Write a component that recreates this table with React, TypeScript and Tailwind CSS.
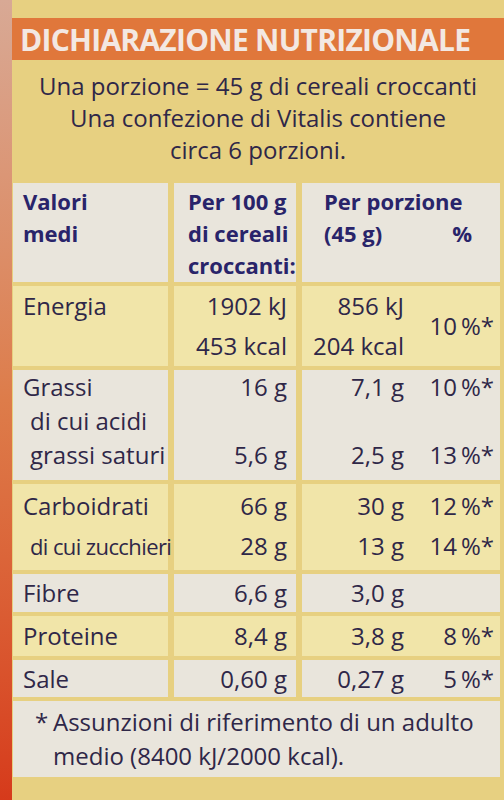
import React from 'react';

const font = { fontFamily: '"Open Sans", "DejaVu Sans", sans-serif' };

const gray = 'bg-[#e9e5dc]';
const yellow = 'bg-[#f1e5a9]';

type Row = {
  tone: string;
  labels: { text: string; sub?: boolean; tight?: boolean }[];
  per100: string[];
  perPortion: string[];
  pct: string[];
  lead: string;
  pad: string;
  h: string;
  centerPct?: boolean;
};

const rows: Row[] = [
  {
    tone: yellow,
    labels: [{ text: 'Energia' }],
    per100: ['1902 kJ', '453 kcal'],
    perPortion: ['856 kJ', '204 kcal'],
    pct: ['10\u2009%*'],
    lead: 'leading-[40px]',
    pad: 'pt-0',
    h: 'h-[80px]',
    centerPct: true,
  },
  {
    tone: gray,
    labels: [{ text: 'Grassi' }, { text: 'di cui acidi', sub: true }, { text: 'grassi saturi', sub: true }],
    per100: ['16 g', '', '5,6 g'],
    perPortion: ['7,1 g', '', '2,5 g'],
    pct: ['10\u2009%*', '', '13\u2009%*'],
    lead: 'leading-[34px]',
    pad: 'pt-0',
    h: 'h-[110px]',
  },
  {
    tone: yellow,
    labels: [{ text: 'Carboidrati' }, { text: 'di cui zucchieri', sub: true, tight: true }],
    per100: ['66 g', '28 g'],
    perPortion: ['30 g', '13 g'],
    pct: ['12\u2009%*', '14\u2009%*'],
    lead: 'leading-[40px]',
    pad: 'pt-[2px]',
    h: 'h-[86px]',
  },
  {
    tone: gray,
    labels: [{ text: 'Fibre' }],
    per100: ['6,6 g'],
    perPortion: ['3,0 g'],
    pct: [''],
    lead: 'leading-[38px]',
    pad: 'pt-0',
    h: 'h-[38px]',
  },
  {
    tone: yellow,
    labels: [{ text: 'Proteine' }],
    per100: ['8,4 g'],
    perPortion: ['3,8 g'],
    pct: ['8\u2009%*'],
    lead: 'leading-[40px]',
    pad: 'pt-0',
    h: 'h-[40px]',
  },
  {
    tone: gray,
    labels: [{ text: 'Sale' }],
    per100: ['0,60 g'],
    perPortion: ['0,27 g'],
    pct: ['5\u2009%*'],
    lead: 'leading-[37px]',
    pad: 'pt-0',
    h: 'h-[37px]',
  },
];

const Line = ({ children }: { children: React.ReactNode }) => <div className="whitespace-pre">{children || '\u00a0'}</div>;

export default function App() {
  return (
    <div className="flex h-[800px] w-[504px] overflow-hidden bg-[#e7d081] text-[#2f2748]" style={font}>
      <div className="w-[12px] shrink-0 bg-gradient-to-b from-[#d8a995] via-[#dd7c4a] to-[#d63a1b]" />

      <div className="flex flex-1 flex-col pt-[18px]">
        <div className="flex h-[42px] items-center bg-[#e0773b] pl-[8px] text-[30px] font-bold tracking-tight text-[#f3e8e2]">
          DICHIARAZIONE NUTRIZIONALE
        </div>

        <div className="pt-[10px] text-center text-[24px] leading-[32px]">
          <div>Una porzione = 45 g di cereali croccanti</div>
          <div>Una confezione di Vitalis contiene</div>
          <div>circa 6 porzioni.</div>
        </div>

        <div className="mt-[17px] ml-[1px] mr-[4px] grid grid-cols-[155px_122px_1fr] gap-x-[6px] gap-y-[4px] text-[24px]">
          {/* header */}
          <div className={`${gray} h-[99px] pl-[10px] pt-[2px] text-[22px] font-bold leading-[32px] text-[#29246a]`}>
            <div>Valori</div>
            <div>medi</div>
          </div>
          <div className={`${gray} pl-[14px] pt-[2px] text-[22px] font-bold leading-[32px] text-[#29246a]`}>
            <div>Per 100 g</div>
            <div>di cereali</div>
            <div>croccanti:</div>
          </div>
          <div className={`${gray} pl-[22px] pr-[28px] pt-[2px] text-[22px] font-bold leading-[32px] text-[#29246a]`}>
            <div>Per porzione</div>
            <div className="flex justify-between">
              <span>(45 g)</span>
              <span>%</span>
            </div>
          </div>

          {rows.map((row, i) => (
            <React.Fragment key={i}>
              <div className={`${row.tone} ${row.lead} ${row.pad} ${row.h}`}>
                {row.labels.map((l) => (
                  <div
                    key={l.text}
                    className={`whitespace-nowrap ${l.sub ? 'pl-[17px]' : 'pl-[10px]'} ${l.tight ? 'text-[22px] tracking-[-0.6px]' : ''}`}
                  >
                    {l.text}
                  </div>
                ))}
              </div>
              <div className={`${row.tone} ${row.lead} ${row.pad} ${row.h} pr-[9px] text-right`}>
                {row.per100.map((v, j) => (
                  <Line key={j}>{v}</Line>
                ))}
              </div>
              <div className={`${row.tone} ${row.lead} ${row.pad} ${row.h} flex`}>
                <div className="w-[102px] text-right">
                  {row.perPortion.map((v, j) => (
                    <Line key={j}>{v}</Line>
                  ))}
                </div>
                <div className={`flex flex-1 flex-col pr-[6px] text-right ${row.centerPct ? 'justify-center' : ''}`}>
                  {row.pct.map((v, j) => (
                    <Line key={j}>{v}</Line>
                  ))}
                </div>
              </div>
            </React.Fragment>
          ))}

          <div className={`${gray} col-span-3 flex h-[76px] pl-[22px] pt-[4px] leading-[34px]`}>
            <span className="w-[18px]">*</span>
            <div>
              <div>Assunzioni di riferimento di un adulto</div>
              <div>medio (8400 kJ/2000 kcal).</div>
            </div>
          </div>
        </div>
      </div>
    </div>
  );
}
